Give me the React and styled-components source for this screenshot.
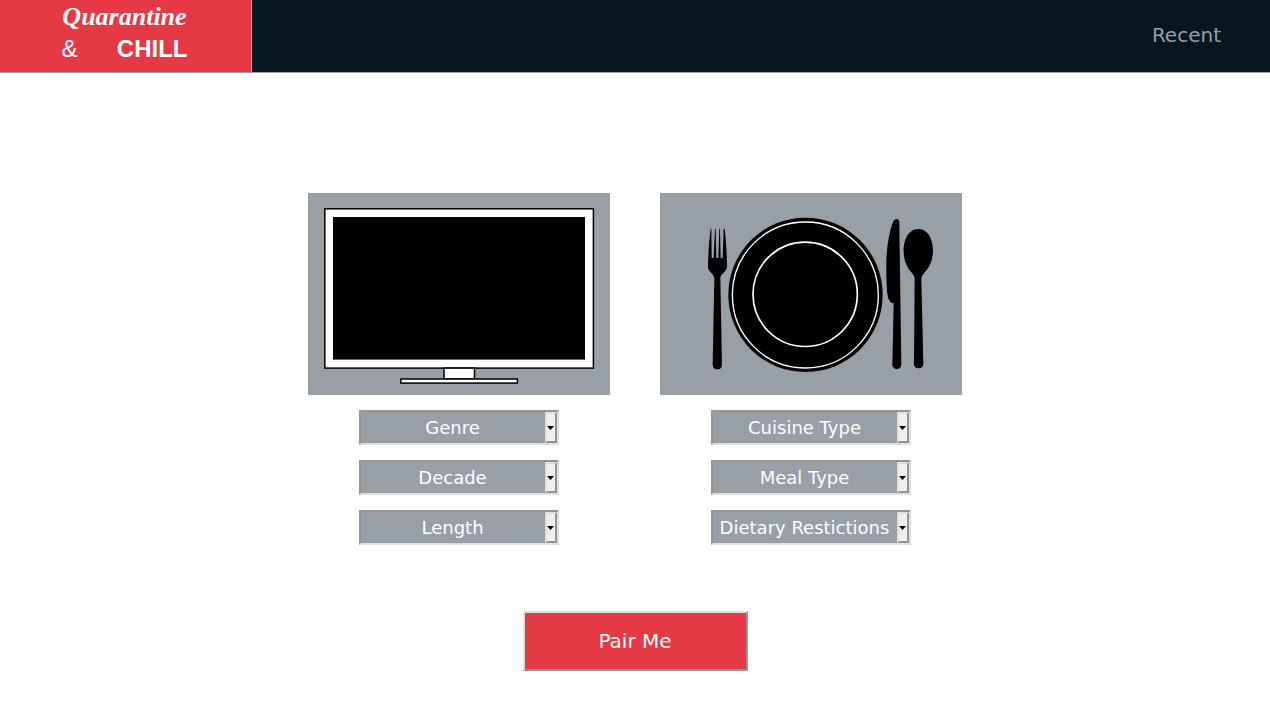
import React from "react";
import styled, { createGlobalStyle, ThemeProvider } from "styled-components";

const theme = {
  red: "#e63946",
  navy: "#07161f",
  gray: "#989fa5",
  light: "#dfdfdf",
  shadow: "#949494",
  face: "#f0efee",
};

const GlobalStyle = createGlobalStyle`
  * { box-sizing: border-box; }
  body {
    margin: 0;
    background: #fff;
    font-family: "DejaVu Sans", Verdana, sans-serif;
  }
`;

const Header = styled.header`
  display: flex;
  justify-content: space-between;
  height: 73px;
  background: ${(p) => p.theme.navy};
  border-bottom: 1px solid ${(p) => p.theme.gray};
`;

const Logo = styled.a`
  display: flex;
  flex-direction: column;
  align-items: center;
  width: 252px;
  padding-right: 2px;
  background: ${(p) => p.theme.red};
  border-right: 1px solid ${(p) => p.theme.gray};
  color: #fff;
  text-decoration: none;
`;

const LogoScript = styled.span`
  font: italic bold 26px/34px "Liberation Serif", serif;
`;

const LogoLine = styled.span`
  display: flex;
  justify-content: space-between;
  width: 126px;
  font: 24px/30px "Liberation Sans Narrow", "Liberation Sans", sans-serif;
`;

const LogoStrong = styled.strong`
  font-weight: bold;
`;

const Nav = styled.nav`
  display: flex;
  align-items: center;
  padding: 0 49px 2px 0;
`;

const NavLink = styled.a`
  color: ${(p) => p.theme.gray};
  font-size: 20px;
  line-height: 24px;
  text-decoration: none;
`;

const Main = styled.main`
  display: flex;
  flex-direction: column;
  align-items: center;
  padding: 120px 16px 35px;
`;

const Form = styled.form`
  display: flex;
  flex-direction: column;
  align-items: center;
  gap: 66px;
`;

const Columns = styled.div`
  display: flex;
  flex-wrap: wrap;
  justify-content: center;
  gap: 50px;
`;

const Column = styled.section`
  display: flex;
  flex-direction: column;
  align-items: center;
  gap: 15px;
`;

const Picture = styled.svg`
  display: block;
  width: 302px;
  height: 202px;
  background: ${(p) => p.theme.gray};
`;

const SelectBox = styled.div`
  position: relative;
  width: 200px;
  height: 35px;
`;

const Select = styled.select`
  appearance: none;
  width: 100%;
  height: 100%;
  margin: 0;
  padding: 0 13px 0 0;
  border: 2px solid;
  border-color: ${(p) => `${p.theme.shadow} ${p.theme.light} ${p.theme.light} ${p.theme.shadow}`};
  border-radius: 0;
  background: ${(p) => p.theme.gray};
  color: #fff;
  font-family: inherit;
  font-size: 18px;
  text-align: center;
  text-align-last: center;
`;

const Arrow = styled.span`
  position: absolute;
  top: 2px;
  right: 2px;
  bottom: 2px;
  display: flex;
  align-items: center;
  width: 12px;
  border: 2px solid;
  border-color: ${(p) => `${p.theme.light} ${p.theme.shadow} ${p.theme.shadow} ${p.theme.light}`};
  background: ${(p) => p.theme.face};
  pointer-events: none;
`;

const ArrowIcon = styled.svg`
  flex: none;
  width: 7px;
  height: 4px;
`;

const PairButton = styled.button`
  width: 225px;
  height: 60px;
  padding: 0;
  border: 2px solid;
  border-color: ${(p) => `${p.theme.light} ${p.theme.shadow} ${p.theme.shadow} ${p.theme.light}`};
  background: ${(p) => p.theme.red};
  color: #fff;
  font-family: inherit;
  font-size: 20px;
`;

function Television() {
  return (
    <Picture viewBox="0 0 302 202" role="img" aria-label="Television">
      <g fill="#fff" stroke="#000" strokeWidth="1.5">
        <rect x="16.8" y="15.8" width="268.6" height="159.3" />
        <rect x="136" y="175.1" width="30.5" height="10.8" />
        <rect x="92.8" y="186" width="116.6" height="4.1" />
      </g>
      <rect x="25" y="24" width="252" height="142.6" />
    </Picture>
  );
}

function PlaceSetting() {
  return (
    <Picture viewBox="15 24 906 606" role="img" aria-label="Plate and cutlery">
      <circle cx="451.5" cy="329.5" r="231.5" />
      <g fill="none" stroke="#fff">
        <circle cx="451" cy="330" r="219" strokeWidth="4" />
        <circle cx="450.5" cy="328" r="156.5" strokeWidth="5" />
      </g>
      <path d="M167 131 L169 131 L170 219 L176 219 L180 131 L182 131 L184 219 L190 219 L193 131 L195 131 L197 219 L203 219 L206 131 L209 131 Q215 180 216 248 Q214 256 206 263 Q196 270 196 280 L201 539 Q200 553 187 553 Q174 553 173 539 L178 280 Q178 271 169 264 Q159 256 159 248 Q160 180 167 131 Z" />
      <path d="M733 110 L739 540 Q737 552 726 552 Q714 552 712 540 L716 355 Q705 356 699 337 Q693 310 694 225 Q697 155 714 111 Q718 102 725 102 Q732 103 733 110 Z" />
      <path d="M790 132 C820 132 834 165 834 197 C834 230 820 250 807 265 Q799 273 799 282 L805 537 Q804 550 791 550 Q778 550 777 537 L779 282 Q779 273 771 264 C757 249 746 229 746 197 C746 165 760 132 790 132 Z" />
    </Picture>
  );
}

function Dropdown({ label }) {
  return (
    <SelectBox>
      <Select aria-label={label} defaultValue="">
        <option value="">{label}</option>
      </Select>
      <Arrow aria-hidden="true">
        <ArrowIcon viewBox="0 0 7 4">
          <path d="M0 0H7L3.5 4Z" />
        </ArrowIcon>
      </Arrow>
    </SelectBox>
  );
}

const movieFilters = ["Genre", "Decade", "Length"];
const mealFilters = ["Cuisine Type", "Meal Type", "Dietary Restictions"];

export default function App() {
  return (
    <ThemeProvider theme={theme}>
      <GlobalStyle />
      <Header>
        <Logo href="#home">
          <LogoScript>Quarantine</LogoScript>
          <LogoLine>
            <span>&amp;</span>
            <LogoStrong>CHILL</LogoStrong>
          </LogoLine>
        </Logo>
        <Nav>
          <NavLink href="#recent">Recent</NavLink>
        </Nav>
      </Header>
      <Main>
        <Form onSubmit={(event) => event.preventDefault()}>
          <Columns>
            <Column>
              <Television />
              {movieFilters.map((label) => (
                <Dropdown key={label} label={label} />
              ))}
            </Column>
            <Column>
              <PlaceSetting />
              {mealFilters.map((label) => (
                <Dropdown key={label} label={label} />
              ))}
            </Column>
          </Columns>
          <PairButton type="submit">Pair Me</PairButton>
        </Form>
      </Main>
    </ThemeProvider>
  );
}
